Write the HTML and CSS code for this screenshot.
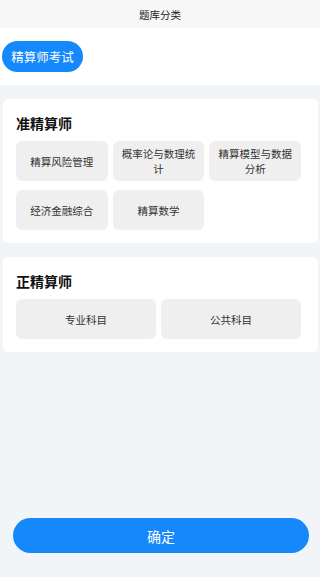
FILE: index.html
```html
<!DOCTYPE html>
<html lang="zh">
<head>
<meta charset="utf-8">
<meta name="viewport" content="width=device-width, initial-scale=1">
<title>题库分类</title>
<link rel="stylesheet" href="styles.css">
</head>
<body>
<div class="page">
  <header class="topbar">题库分类</header>
  <section class="tabs">
    <span class="tab active">精算师考试</span>
  </section>
  <main class="content">
    <div class="card">
      <h2 class="card-title">准精算师</h2>
      <div class="grid grid-3">
        <div class="item">精算风险管理</div>
        <div class="item">概率论与数理统计</div>
        <div class="item">精算模型与数据分析</div>
        <div class="item">经济金融综合</div>
        <div class="item">精算数学</div>
      </div>
    </div>
    <div class="card">
      <h2 class="card-title">正精算师</h2>
      <div class="grid grid-2">
        <div class="item">专业科目</div>
        <div class="item">公共科目</div>
      </div>
    </div>
  </main>
  <footer class="footer">
    <button class="confirm" type="button">确定</button>
  </footer>
</div>
</body>
</html>
```

FILE: styles.css
```css
* { box-sizing: border-box; }
html, body {
  margin: 0;
  padding: 0;
  background: #f2f5f8;
  font-family: "Noto Sans CJK SC", "Noto Sans", sans-serif;
  color: #333;
}
.page {
  height: 577px;
  display: flex;
  flex-direction: column;
}
.topbar {
  height: 28px;
  background: #f7f7f7;
  display: flex;
  align-items: center;
  justify-content: center;
  font-size: 10.5px;
  color: #222;
}
.tabs {
  background: #fff;
  height: 57px;
  padding: 13px 2px 0;
}
.tab {
  display: inline-flex;
  align-items: center;
  justify-content: center;
  height: 31px;
  width: 81px;
  border-radius: 16px;
  font-size: 12.5px;
}
.tab.active {
  background: #1589fb;
  color: #fff;
}
.content {
  padding: 14px 2px 0 3px;
  display: flex;
  flex-direction: column;
  gap: 14px;
}
.card {
  background: #fff;
  border-radius: 5px;
  padding: 14px 17px 13px 13px;
}
.card-title {
  margin: 0 0 8px;
  font-size: 14px;
  font-weight: bold;
  line-height: 20px;
  color: #111;
}
.grid {
  display: grid;
  gap: 9px 5px;
}
.grid-3 { grid-template-columns: repeat(3, 1fr); }
.grid-2 { grid-template-columns: repeat(2, 1fr); }
.item {
  height: 40px;
  background: #efefef;
  border-radius: 6px;
  display: flex;
  align-items: center;
  justify-content: center;
  text-align: center;
  font-size: 10.5px;
  line-height: 15px;
  padding: 0 6px;
  color: #333;
}
.footer {
  margin-top: auto;
  padding: 0 11px 24px 13px;
}
.confirm {
  width: 100%;
  height: 35px;
  border: none;
  border-radius: 18px;
  background: #1589fb;
  color: #fff;
  font-family: inherit;
  font-size: 14px;
}
```
